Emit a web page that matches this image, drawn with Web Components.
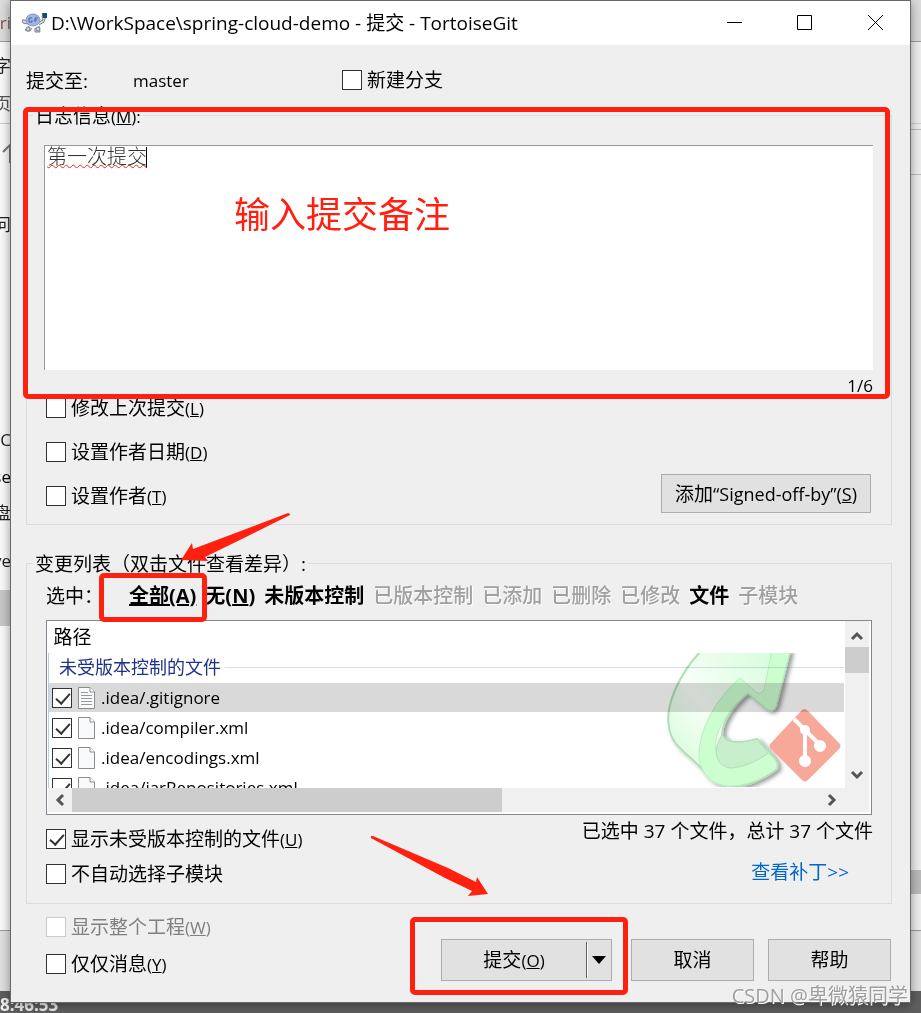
<!DOCTYPE html>
<html lang="zh-CN">
<head>
<meta charset="UTF-8">
<title>TortoiseGit</title>
<style>
    body{
        margin: 0;
        position: relative;
        min-height: 100vh;
        overflow-x: hidden;
        background: #fafafa;
        color: #000;
        font: 19px/24px "Open Sans","Noto Sans CJK SC",sans-serif;
    }
    small{
        font-size: 17px;
    }
    .head{
        display: grid;
        grid-template-columns: 107px 209px 1fr;
        padding: 23px 15px 8px;
        line-height: 26px;
    }
    .stack{
        display: flex;
        flex-direction: column;
        align-items: flex-start;
    }
    .options{
        display: flex;
        justify-content: space-between;
        align-items: flex-end;
        padding: 0 2px 11px;
    }
    .options .stack{
        gap: 20px;
        padding-bottom: 5px;
    }
    .sign small{
        font-size: 18px;
    }
    .summary{
        display: flex;
        justify-content: space-between;
        align-items: flex-start;
        padding: 0 0 17px 2px;
    }
    .summary .stack{
        gap: 11px;
        padding-top: 12px;
    }
    .summary .totals{
        gap: 17px;
        padding-top: 4px;
    }
    .totals a{
        align-self: flex-end;
        margin-right: 24px;
        color: #0066cc;
        text-decoration: none;
    }
    .foot{
        display: flex;
        justify-content: space-between;
        padding: 11px 19px 21px 35px;
    }
    .foot .stack{
        gap: 13px;
        padding-bottom: 5px;
    }
    .buttons{
        display: flex;
        align-items: flex-end;
        gap: 14px;
    }
    .buttons push-button{
        width: 123px;
    }
    .buttons split-button{
        margin-right: 5px;
    }
    .note,.stamp,mark-arrow,mark-frame{
        position: absolute;
        pointer-events: none;
    }
    .note{
        left: 223px;
        top: 192px;
        font-size: 36px;
        line-height: 44px;
        color: #ff2010;
    }
    .stamp{
        right: 2px;
        bottom: -6px;
        font-size: 20px;
        color: rgba(130,130,130,.75);
        text-shadow: 1px 1px 0 #fff;
        white-space: nowrap;
    }
</style>
</head>
<body>
<desktop-backdrop></desktop-backdrop>
<commit-window>
    <title-bar slot="title">D:\WorkSpace\spring-cloud-demo - 提交 - TortoiseGit</title-bar>

    <div class="head">
        <span>提交至:</span>
        <small>master</small>
        <check-option>新建分支</check-option>
    </div>

    <group-box>
        <span slot="legend">日志信息<small>(<u>M</u>):</small></span>
        <log-editor position="1/6">第一次提交</log-editor>
        <div class="options">
            <div class="stack">
                <check-option>修改上次提交<small>(<u>L</u>)</small></check-option>
                <check-option>设置作者日期<small>(<u>D</u>)</small></check-option>
                <check-option>设置作者<small>(<u>T</u>)</small></check-option>
            </div>
            <push-button class="sign">添加<small>“Signed-off-by”(<u>S</u>)</small></push-button>
        </div>
    </group-box>

    <group-box class="changes">
        <span slot="legend">变更列表（双击文件查看差异）:</span>
        <filter-bar></filter-bar>
        <file-list></file-list>
        <div class="summary">
            <div class="stack">
                <check-option checked>显示未受版本控制的文件<small>(<u>U</u>)</small></check-option>
                <check-option>不自动选择子模块</check-option>
            </div>
            <div class="stack totals">
                <span>已选中 37 个文件，总计 37 个文件</span>
                <a href="#patch">查看补丁&gt;&gt;</a>
            </div>
        </div>
    </group-box>

    <div class="foot">
        <div class="stack">
            <check-option disabled>显示整个工程<small>(<u>W</u>)</small></check-option>
            <check-option>仅仅消息<small>(<u>Y</u>)</small></check-option>
        </div>
        <div class="buttons">
            <split-button>提交<small>(<u>O</u>)</small></split-button>
            <push-button>取消</push-button>
            <push-button>帮助</push-button>
        </div>
    </div>

    <mark-frame style="left:12px;right:20px;top:106px;height:292px"></mark-frame>
    <mark-frame style="left:88px;top:572px;width:108px;height:49px"></mark-frame>
    <mark-frame style="right:282px;top:916px;width:218px;height:78px"></mark-frame>
    <mark-arrow style="left:167px;top:511px" w="114" h="52" points="110,1 112,2 112,3 70,24 27,45 30,49 3,48 14,31 15,37"></mark-arrow>
    <mark-arrow style="left:359px;top:834px" w="122" h="64" points="1,1 3,1 78,33 106,47 107,42 118,59 98,61 102,56 75,43 1,3"></mark-arrow>
    <div class="note">输入提交备注</div>
    <div class="stamp">CSDN @卑微猿同学</div>
</commit-window>

<script>
class BaseView extends HTMLElement {
    constructor() {
        super()
        this.attachShadow({mode: 'open'})
    }
    get css() {
        return ``
    }
    get html() {
        return `<slot></slot>`
    }
    connectedCallback() {
        this.shadowRoot.innerHTML = `<style>*{box-sizing:border-box}${this.css}</style>${this.html}`
    }
}

// whatever lies behind the dialog
class DesktopBackdrop extends BaseView {
    get css() {
        return `:host{
                position: absolute;
                inset: 0;
                overflow: hidden;
                background: #fafafa;
            }
            i{
                position: absolute;
                left: 0;
                right: 0;
            }
            .right{
                left: auto;
                width: 10px;
            }
            .left{
                right: auto;
                width: 10px;
            }
            span{
                position: absolute;
                line-height: 24px;
                white-space: nowrap;
                font-size: 17px;
            }
            .clock{
                bottom: -4px;
                left: 0;
                font-weight: 700;
                color: #eee;
            }
            .clip{
                position: absolute;
                left: 0;
                top: 0;
                bottom: 12px;
                width: 11px;
                overflow: hidden;
            }
            .clip span{
                right: 0;
            }`
    }
    get html() {
        const texts = [['ri', 11, '#865050'], ['字', 54, '#222'], ['页', 92, '#555'], ['问', 213, '#222'],
            ['gC', 428, '#222'], ['se', 465, '#000'], ['盘', 501, '#222'], ['ve', 549, '#222']]
        return `<i style="top:0;height:42px;background:#dcdcdc;border-bottom:1px solid #999"></i>
            <i class="right" style="top:42px;height:888px;background:#eee"></i>
            <i style="top:123px;height:1px;background:#ccc"></i>
            <i class="right" style="top:129px;height:1px;background:#bbb"></i>
            <i class="right" style="top:174px;height:1px;background:#bbb"></i>
            <i class="left" style="top:590px;height:36px;background:#c8c8c8"></i>
            <i class="right" style="top:870px;height:24px;background:#bbb"></i>
            <i style="top:930px;bottom:22px;background:#e0e0e0;border-top:1px solid #999"></i>
            <i style="height:22px;bottom:0;background:#5f5f5f"></i>
            <div class="clip">
                ${texts.map(t => `<span style="top:${t[1]}px;color:${t[2]}">${t[0]}</span>`).join('')}
                <svg style="position:absolute;left:2px;top:143px" width="9" height="20" fill="none" stroke="#777" stroke-width="2"><path d="M1 9L8 2V20"/></svg>
            </div>
            <span class="clock">8:46:53</span>`
    }
}

class CommitWindow extends BaseView {
    get css() {
        return `:host{
                display: block;
                position: relative;
                margin: 0 10px;
                border: 1px solid #686868;
                background: #efefef;
                box-shadow: 0 2px 10px rgba(0,0,0,.4);
            }`
    }
    get html() {
        return `<slot name="title"></slot><slot></slot>`
    }
}

class TitleBar extends BaseView {
    get css() {
        return `:host{
                display: flex;
                align-items: center;
                height: 44px;
                padding-left: 11px;
                background: #fff;
                font-size: 19px;
            }
            span{
                flex: 1;
                margin-left: 4px;
            }
            button{
                width: 70px;
                height: 44px;
                padding: 0;
                border: 0;
                background: none;
            }
            button svg{
                display: block;
                margin: auto;
            }`
    }
    get html() {
        return `<svg width="25" height="22" viewBox="0 0 25 22">
                <g fill="#d5d9e0" stroke="#7d828c">
                    <path d="M7 14L3 18L5 19H8L10 16M13 16L13 20H18L17 14M6 12L1 11L0 8L3 8L5 10"/>
                    <circle cx="6" cy="17" r="2"/><circle cx="16" cy="17" r="2"/>
                    <path d="M17 10L21 8L20 4L22 2L24 4L22 10L17 13"/>
                </g>
                <ellipse cx="11" cy="8" rx="7" ry="6" fill="#9eb4e4" stroke="#8496c4"/>
                <path d="M10 6H7V10H10V8M13 6V10M13 6H16M13 8H15" fill="none" stroke="#4c629b"/>
                <path d="M20 1h5v5h-4z" fill="#124d73"/>
            </svg>
            <span><slot></slot></span>
            <button aria-label="最小化"><svg width="16" height="16"><path d="M0 7.500H15" stroke="#000"/></svg></button>
            <button aria-label="最大化"><svg width="16" height="16"><path d="M.5 .5H14.500V14.500H.5Z" fill="none" stroke="#000"/></svg></button>
            <button aria-label="关闭"><svg width="16" height="16"><path d="M1 0L16 15M16 0L1 15" stroke="#000"/></svg></button>`
    }
}

class GroupBox extends BaseView {
    get css() {
        return `:host{
                display: block;
                margin: 0 18px 0 15px;
            }
            :host(.changes){
                margin-top: 25px;
            }
            fieldset{
                margin: 0;
                min-width: 0;
                border: 1px solid #dcdcdc;
                padding: 0 18px 0 17px;
            }
            legend{
                margin-left: -11px;
                padding: 2px 2px 0;
            }`
    }
    get html() {
        return `<fieldset><legend><slot name="legend"></slot></legend><slot></slot></fieldset>`
    }
}

class CheckOption extends BaseView {
    static get checkCSS() {
        return `input{
                appearance: none;
                flex: none;
                width: 20px;
                height: 20px;
                margin: 0;
                border: 1px solid #333;
                background: #fff;
            }
            input:checked::before{
                content: "";
                display: block;
                width: 6px;
                height: 12px;
                margin: 1px 0 0 6px;
                border: solid #333;
                border-width: 0 2px 2px 0;
                transform: rotate(42deg);
            }
            input:disabled{
                border-color: #ccc;
            }`
    }
    get css() {
        return `:host{
                display: block;
            }
            :host([disabled]){
                color: #808080;
            }
            label{
                display: flex;
                align-items: center;
                gap: 5px;
                height: 24px;
                white-space: nowrap;
            }
            ${CheckOption.checkCSS}`
    }
    get html() {
        const flags = ['checked', 'disabled'].filter(f => this.hasAttribute(f)).join(' ')
        return `<label><input type="checkbox" ${flags}><span><slot></slot></span></label>`
    }
}

class LogEditor extends BaseView {
    get css() {
        return `:host{
                display: block;
                padding-top: 16px;
            }
            textarea{
                display: block;
                width: 100%;
                height: 225px;
                padding: 0 2px;
                border: solid #999;
                border-width: 1px 0 0 1px;
                outline: 0;
                resize: none;
                /* caret */
                background: linear-gradient(#000,#000) 101px 1px/1px 21px no-repeat #fff;
                color: #333;
                font: 300 20px/22px "Liberation Serif","Noto Sans CJK SC",serif;
                text-decoration: underline wavy #e03030 1px;
                text-underline-offset: 0;
            }
            output{
                display: block;
                margin-top: 6px;
                font-size: 17px;
                line-height: 20px;
                text-align: right;
            }`
    }
    get html() {
        return `<textarea aria-label="日志信息" spellcheck="false">${this.textContent}</textarea>
            <output>${this.getAttribute('position')}</output>`
    }
}

class PushButton extends BaseView {
    get css() {
        return `:host{
                display: block;
            }
            button{
                width: 100%;
                height: 42px;
                padding: 0 13px;
                border: 1px solid #adadad;
                background: #e1e1e1;
                color: #000;
                font: inherit;
                white-space: nowrap;
            }
            :host(.sign) button{
                height: 39px;
            }`
    }
    get html() {
        return `<button><slot></slot></button>`
    }
}

class SplitButton extends BaseView {
    get css() {
        return `:host{
                box-sizing: border-box;
                display: flex;
                width: 171px;
                height: 42px;
                border: 1px solid #adadad;
                background: #e1e1e1;
            }
            button{
                flex: 1;
                padding: 0;
                border: 0;
                background: none;
                color: #000;
                font: inherit;
            }
            .more{
                flex: none;
                width: 25px;
                margin: 2px 0;
                border-left: 1px solid #606060;
                box-shadow: inset 1px 0 #fff;
            }
            svg{
                display: block;
                margin: auto;
            }`
    }
    get html() {
        return `<button><slot></slot></button>
            <button class="more" aria-label="更多"><svg width="14" height="8"><path d="M0 0H14L7 8Z"/></svg></button>`
    }
}

class FilterBar extends BaseView {
    get items() {
        return [
            {text: '无(<u>N</u>)', on: true},
            {text: '未版本控制', on: true},
            {text: '已版本控制'},
            {text: '已添加'},
            {text: '已删除'},
            {text: '已修改'},
            {text: '文件', on: true},
            {text: '子模块'},
        ]
    }
    get css() {
        return `:host{
                display: flex;
                gap: 9px;
                padding: 8px 2px 12px;
                white-space: nowrap;
            }
            span{
                width: 74px;
            }
            button{
                padding: 0;
                border: 0;
                background: none;
                color: #000;
                font: 700 20px/24px "Open Sans","Noto Sans CJK SC",sans-serif;
            }
            button:disabled{
                color: #a0a0a0;
                font-weight: 500;
                text-shadow: 1px 1px #fff;
            }
            .hot{
                text-decoration: underline;
            }`
    }
    get html() {
        return `<span>选中：</span><button class="hot">全部(A)</button>` +
            this.items.map(i => `<button ${i.on ? '' : 'disabled'}>${i.text}</button>`).join('')
    }
}

class FileList extends BaseView {
    get files() {
        return [
            {name: '.idea/.gitignore', text: true},
            {name: '.idea/compiler.xml'},
            {name: '.idea/encodings.xml'},
            {name: '.idea/jarRepositories.xml'},
        ]
    }
    get css() {
        return `:host{
                display: grid;
                grid-template: 167px 24px / 1fr 24px;
                margin: 0 1px 0 2px;
                padding: 0 2px 2px 1px;
                border: 1px solid #828790;
                background: #fff;
            }
            .view{
                position: relative;
                overflow: hidden;
                margin-right: 1px;
            }
            .watermark{
                position: absolute;
                right: 0;
                top: 32px;
                mix-blend-mode: multiply;
            }
            table{
                width: 100%;
                border-collapse: collapse;
            }
            th,td{
                padding: 0;
                text-align: left;
                font-weight: 400;
            }
            thead th{
                height: 32px;
                padding-left: 5px;
            }
            tbody{
                border-left: 1px solid #b8d0ee;
            }
            .group{
                display: flex;
                align-items: center;
                gap: 4px;
                height: 30px;
                padding: 0 0 2px 10px;
                font-size: 18px;
                color: #1e3287;
            }
            .group::after{
                content: "";
                flex: 1;
                border-top: 1px solid #d3dff0;
            }
            label{
                display: flex;
                align-items: center;
                height: 29px;
                margin-bottom: 1px;
                padding-left: 3px;
                font-size: 17px;
            }
            tr.selected label{
                background: #d9d9d9;
            }
            label svg{
                margin: 0 6px;
            }
            .bar{
                display: flex;
                justify-content: space-between;
                background: #f0f0f0;
            }
            .vertical{
                flex-direction: column;
            }
            .bar svg{
                flex: none;
                margin: 0;
            }
            .thumb{
                background: #cdcdcd;
            }
            .vertical .thumb{
                height: 26px;
                margin: 2px 0 auto;
            }
            .across .thumb{
                width: 54%;
                margin-right: auto;
            }
            ${CheckOption.checkCSS}`
    }
    row(file, i) {
        const lines = file.text ? `<path d="M3 5.500H10M3 8.500H14M3 11.500H14M3 14.500H14M3 17.500H14" stroke="#999"/>` : ''
        return `<tr class="${i ? '' : 'selected'}"><td><label>
            <input type="checkbox" checked>
            <svg width="17" height="22"><path d="M.5 .5H12L16.500 5V21.500H.5Z" fill="#f8fafb" stroke="#8c8c8c"/><path d="M12 .5V5H16.500" fill="#fff" stroke="#8c8c8c"/>${lines}</svg>
            ${file.name}</label></td></tr>`
    }
    arrow(d) {
        return `<svg width="24" height="24" viewBox="0 0 24 24" fill="none" stroke="#555" stroke-width="3"><path d="${d}"/></svg>`
    }
    get html() {
        return `<div class="view">
                <table>
                    <thead><tr><th>路径</th></tr></thead>
                    <tbody><tr><th><div class="group">未受版本控制的文件</div></th></tr>
                    ${this.files.map((f, i) => this.row(f, i)).join('')}</tbody>
                </table>
                ${this.watermark}
            </div>
            <div class="bar vertical">${this.arrow('M7 18L12 13L17 18')}<div class="thumb"></div>${this.arrow('M7 8L12 13L17 8')}</div>
            <div class="bar across">${this.arrow('M15 7L10 12L15 17')}<div class="thumb"></div>${this.arrow('M8 7L13 12L8 17')}</div>
            <div class="bar"></div>`
    }
    get watermark() {
        return `<svg class="watermark" width="184" height="134" viewBox="0 0 184 134">
            <defs>
                <linearGradient id="g" x1="0" y1="1" x2="1" y2="0"><stop offset="0" stop-color="#ccfad0"/><stop offset=".45" stop-color="#f8fff8"/><stop offset="1" stop-color="#d2fcd6"/></linearGradient>
                <filter id="s" x="-10%" y="-10%" width="125%" height="125%"><feDropShadow dx="3" dy="2" stdDeviation="2" flood-opacity=".4"/></filter>
            </defs>
            <g filter="url(#s)" stroke-linejoin="round">
                <path d="M41 -2C18 22 5 54 9 74C11 91 24 98 35 109C47 119 51 130 66 134C83 136 104 126 117 116C120 110 112 101 97 86C83 90 67 92 62 82C62 68 74 52 88 40L108 57Q113 59 116 53L130 -2Z" fill="url(#g)" stroke="#b0dfb5" stroke-width="2"/>
                <path d="M112 -2L104 37Q100 42 96 39L80 25C56 46 39 75 39 104C41 121 50 131 67 133C85 134 103 126 116 116C119 110 115 106 108 100C90 113 60 121 56 100C52 81 68 56 88 40L108 57Q113 59 116 53L130 -2Z" fill="#ccfed0" stroke="#b8efbe"/>
                <path d="M62 82C51 98 57 115 72 115Q91 113 108 100L97 86C83 90 67 92 62 82Z" fill="#c8efcc" stroke="#b2deb6"/>
            </g>
            <path d="M141 58Q144 54 148 58L179 90Q182 93 179 96L148 127Q145 130 142 127L111 96Q108 93 111 90Z" fill="#f7a899"/>
            <g fill="#fff" stroke="#fff" stroke-width="4"><path d="M134 66L145 77L160 92M145 77V107" fill="none"/><circle cx="145" cy="77" r="3"/><circle cx="160" cy="93" r="4"/><circle cx="145" cy="108" r="4"/></g>
        </svg>`
    }
}

class MarkFrame extends BaseView {
    get css() {
        return `:host{
                box-sizing: border-box;
                border: 5px solid #ff2010;
                border-radius: 5px;
            }`
    }
}

class MarkArrow extends BaseView {
    get css() {
        return `svg{
                display: block;
                fill: #ff2010;
            }`
    }
    get html() {
        return `<svg width="${this.getAttribute('w')}" height="${this.getAttribute('h')}"><polygon points="${this.getAttribute('points')}"/></svg>`
    }
}

customElements.define('desktop-backdrop', DesktopBackdrop)
customElements.define('commit-window', CommitWindow)
customElements.define('title-bar', TitleBar)
customElements.define('group-box', GroupBox)
customElements.define('check-option', CheckOption)
customElements.define('log-editor', LogEditor)
customElements.define('push-button', PushButton)
customElements.define('split-button', SplitButton)
customElements.define('filter-bar', FilterBar)
customElements.define('file-list', FileList)
customElements.define('mark-frame', MarkFrame)
customElements.define('mark-arrow', MarkArrow)
</script>
</body>
</html>
